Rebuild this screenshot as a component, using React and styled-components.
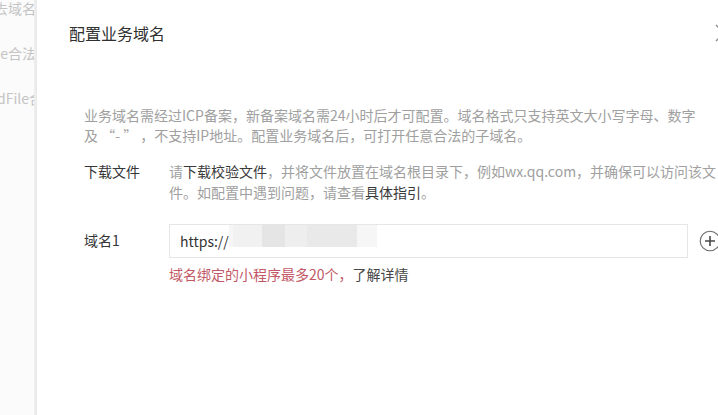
import React from "react";
import styled, { createGlobalStyle } from "styled-components";

const GlobalStyle = createGlobalStyle`
  html, body {
    margin: 0;
    padding: 0;
    background: #fbfbfb;
  }
  body {
    font-family: "Noto Sans CJK SC", "Noto Sans", sans-serif;
    font-size: 14px;
    color: #353535;
  }
`;

const Page = styled.div`
  display: flex;
  width: 718px;
  height: 415px;
  overflow: hidden;
`;

const Side = styled.div`
  flex: 0 0 34px;
  overflow: hidden;
  background: #fbfbfb;
  display: flex;
  flex-direction: column;
  align-items: flex-end;
  gap: 25px;
`;

const SideItem = styled.div`
  white-space: nowrap;
  font-size: 14px;
  line-height: 20px;
  color: #c4c4c4;
  margin-right: ${p => p.shift || -2}px;
  &:first-child {
    margin-top: -2px;
  }
`;

const Edge = styled.div`
  flex: 0 0 3px;
  background: linear-gradient(to right, #efefef, #e9e9e9);
`;

const Modal = styled.div`
  flex: 0 0 716px;
  background: #ffffff;
  padding: 22px 0 0 32px;
  box-sizing: border-box;
`;

const Header = styled.div`
  display: flex;
  justify-content: space-between;
  align-items: flex-start;
  padding-right: 20px;
`;

const Title = styled.h2`
  margin: 0;
  font-size: 16px;
  line-height: 22px;
  font-weight: 400;
  color: #303030;
`;

const Close = styled.button`
  border: none;
  background: transparent;
  padding: 0;
  margin-top: 2px;
  width: 18px;
  height: 18px;
  cursor: pointer;
`;

const Body = styled.div`
  padding: 61px 0 0 15px;
`;

const Desc = styled.p`
  margin: 0;
  line-height: 20px;
  color: #a0a0a0;
  white-space: nowrap;
`;

const Row = styled.div`
  display: flex;
  align-items: flex-start;
  margin-top: ${p => p.top}px;
`;

const Label = styled.div`
  flex: 0 0 85px;
  line-height: 20px;
  margin-top: ${p => p.offset || 0}px;
  color: #353535;
`;

const Text = styled.div`
  line-height: 21px;
  color: #a0a0a0;
  white-space: nowrap;
`;

const Strong = styled.span`
  color: #3a3a3a;
`;

const Field = styled.div`
  display: flex;
  flex-direction: column;
`;

const InputRow = styled.div`
  display: flex;
  align-items: center;
  gap: 11px;
`;

const Input = styled.div`
  width: 519px;
  height: 34px;
  box-sizing: border-box;
  border: 1px solid #e6e6e6;
  display: flex;
  align-items: center;
  padding-left: 10px;
  color: #353535;
  overflow: hidden;
`;

const Blur = styled.div`
  display: flex;
  align-self: stretch;
  margin-top: -3px;
  height: 25px;
`;

const BlurBlock = styled.div`
  width: ${p => p.w}px;
  background: ${p => p.c};
`;

const Plus = styled.button`
  border: none;
  background: transparent;
  padding: 0;
  width: 22px;
  height: 22px;
  cursor: pointer;
`;

const Hint = styled.div`
  margin-top: 6px;
  line-height: 20px;
  color: #c25866;
`;

const Link = styled.span`
  color: #474747;
`;

export default function App() {
  return (
    <>
      <GlobalStyle />
      <Page>
        <Side>
          <SideItem>去域名</SideItem>
          <SideItem>le合法</SideItem>
          <SideItem shift={-9}>dFile合</SideItem>
        </Side>
        <Edge />
        <Modal>
          <Header>
            <Title>配置业务域名</Title>
            <Close aria-label="关闭">
              <svg width="18" height="18" viewBox="0 0 18 18">
                <path d="M1 1 L17 17 M17 1 L1 17" stroke="#8a8a8a" strokeWidth="1.3" />
              </svg>
            </Close>
          </Header>
          <Body>
            <Desc>
              业务域名需经过ICP备案，新备案域名需24小时后才可配置。域名格式只支持英文大小写字母、数字
              <br />
              及 “- ” ，不支持IP地址。配置业务域名后，可打开任意合法的子域名。
            </Desc>
            <Row top={16}>
              <Label>下载文件</Label>
              <Text>
                请<Strong>下载校验文件</Strong>，并将文件放置在域名根目录下，例如wx.qq.com，并确保可以访问该文
                <br />
                件。如配置中遇到问题，请查看<Strong>具体指引</Strong>。
              </Text>
            </Row>
            <Row top={21}>
              <Label offset={6}>域名1</Label>
              <Field>
                <InputRow>
                  <Input>
                    https://
                    <Blur>
                      <BlurBlock w={4} c="#f6f6f6" />
                      <BlurBlock w={29} c="#f1f1f1" />
                      <BlurBlock w={23} c="#e5e5e5" />
                      <BlurBlock w={22} c="#eeeeee" />
                      <BlurBlock w={50} c="#e9e9e9" />
                      <BlurBlock w={20} c="#f6f6f6" />
                    </Blur>
                  </Input>
                  <Plus aria-label="添加">
                    <svg width="22" height="22" viewBox="0 0 22 22">
                      <circle cx="11" cy="11" r="9.8" fill="none" stroke="#6a6a6a" strokeWidth="1.1" />
                      <path d="M11 6 V16 M6 11 H16" stroke="#4a4a4a" strokeWidth="1.6" />
                    </svg>
                  </Plus>
                </InputRow>
                <Hint>
                  域名绑定的小程序最多20个，<Link>了解详情</Link>
                </Hint>
              </Field>
            </Row>
          </Body>
        </Modal>
      </Page>
    </>
  );
}
